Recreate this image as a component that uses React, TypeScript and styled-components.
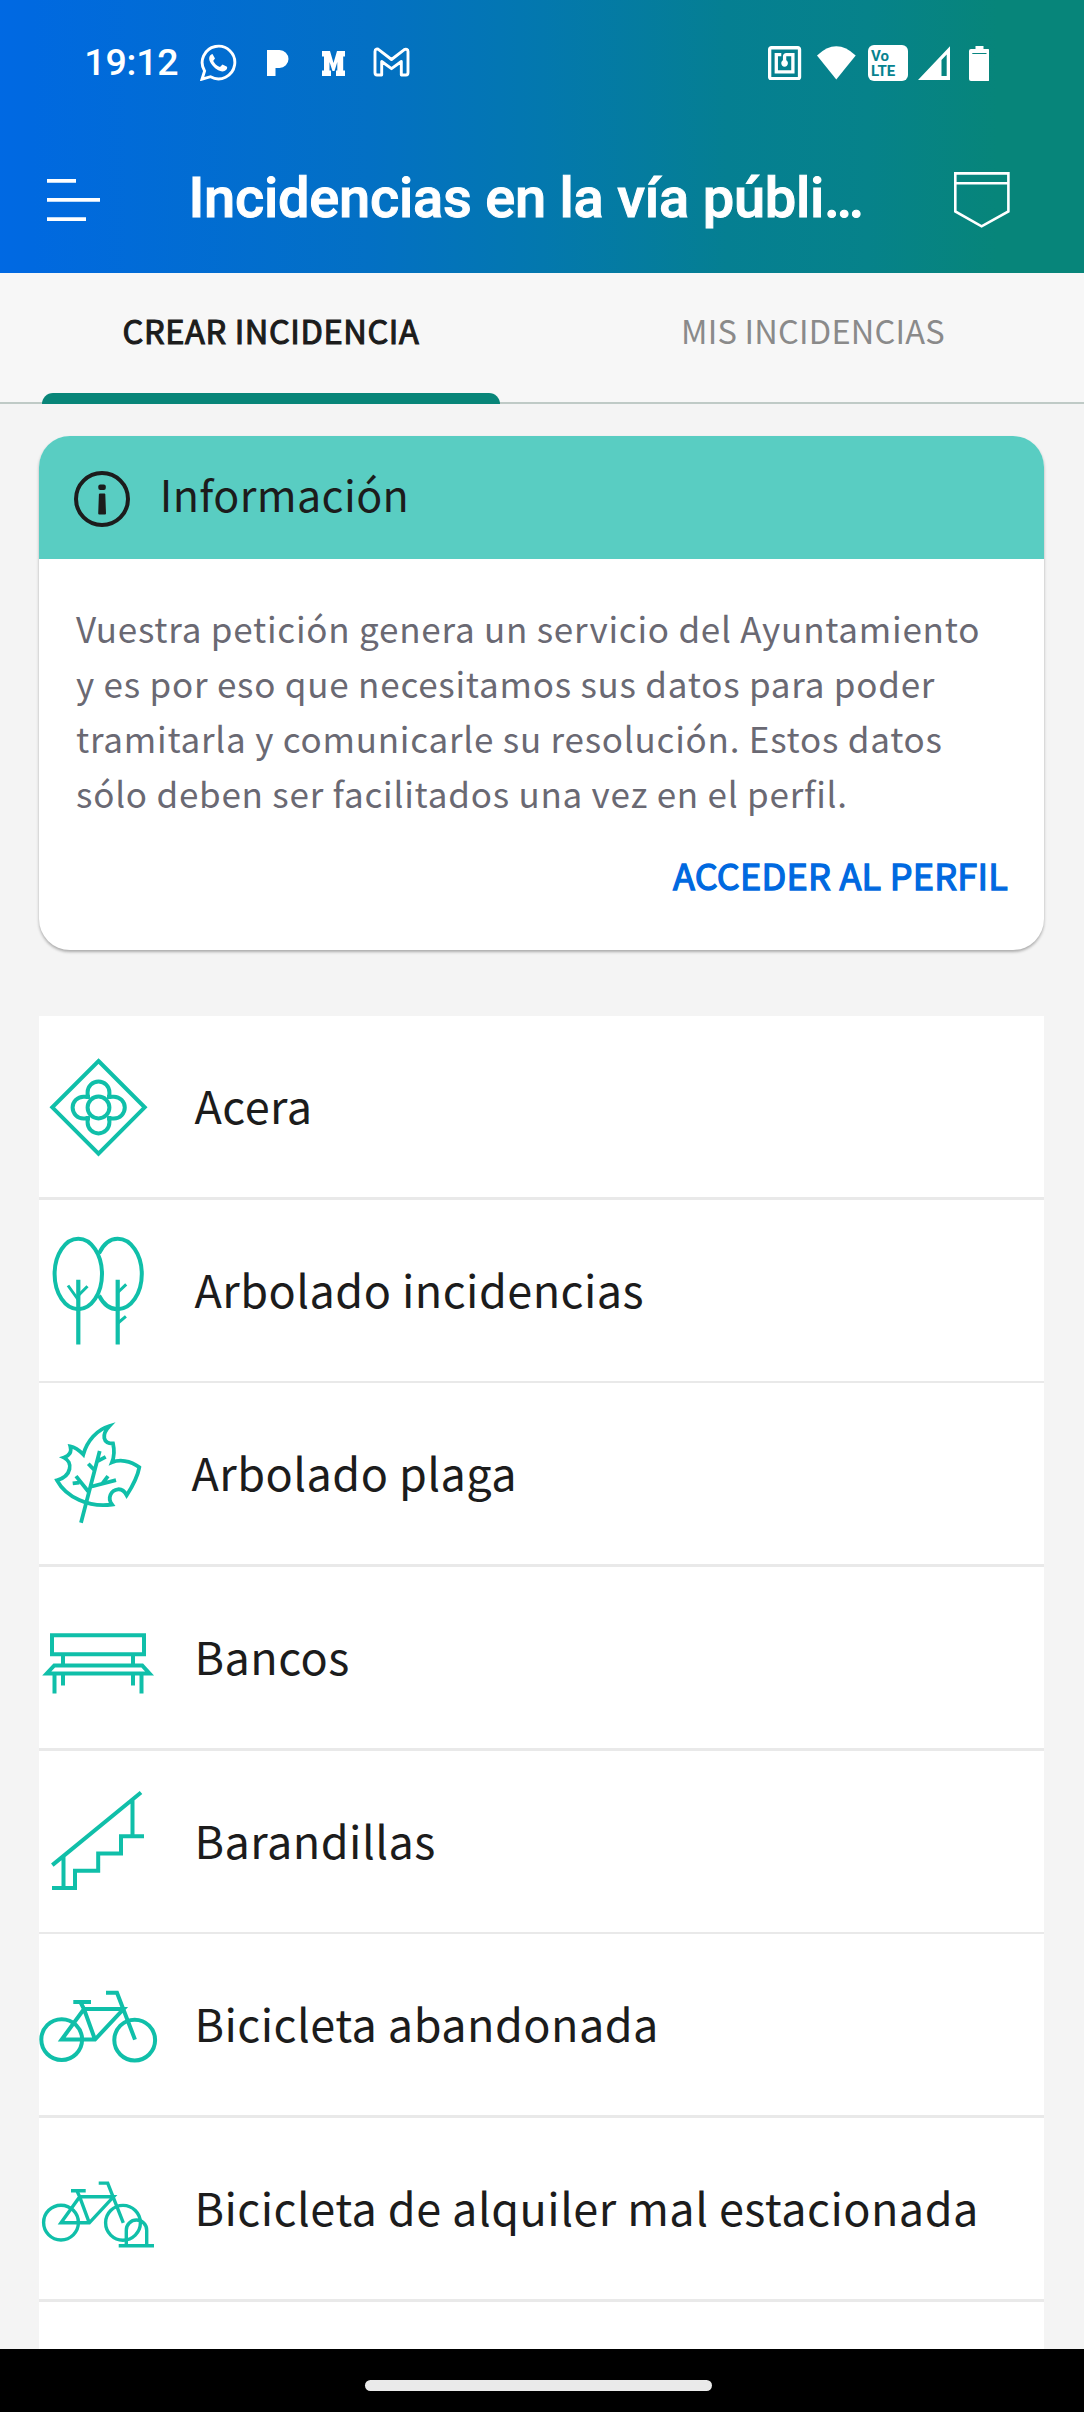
import React from "react";
import styled, { createGlobalStyle } from "styled-components";

const sans = `"Noto Sans CJK SC", "Noto Sans", sans-serif`;
const teal = "#10bfa9";
const ink = "#1c1c1c";

const Global = createGlobalStyle`
  * { box-sizing: border-box; }
  body { margin: 0; background: #f4f4f4; }
`;

const Screen = styled.div`
  width: 1084px;
  height: 2412px;
  display: flex;
  flex-direction: column;
  overflow: hidden;
  background: #f4f4f4;
  color: ${ink};
  font-family: ${sans};
`;

const Header = styled.header`
  height: 273px;
  flex: none;
  color: #fff;
  font-family: Roboto, sans-serif;
  background: linear-gradient(90deg, #0069e3 0%, #0069e0 3%, #0370c4 34%, #0378ae 50%, #057f92 67%, #06828a 80%, #07857a 92%, #07857a 100%);
`;

const StatusBar = styled.div`
  height: 124px;
  padding: 0 94.7px 0 84.3px;
  display: flex;
  align-items: center;
  justify-content: space-between;
`;

const Clock = styled.span`
  width: 115.7px;
  font-size: 37.5px;
  font-weight: 500;
  line-height: 44px;
  letter-spacing: -0.2px;
  white-space: nowrap;
`;

const IconRow = styled.div<{ $drop?: number }>`
  display: flex;
  align-items: center;
  padding-top: ${(p) => p.$drop ?? 0}px;
`;

const Glyph = styled.svg<{ $gap?: number }>`
  display: block;
  flex: none;
  margin-left: ${(p) => p.$gap ?? 0}px;
`;

const AppBar = styled.div`
  height: 149px;
  padding: 0 74.3px 0 47px;
  display: flex;
  align-items: center;
`;

const Title = styled.h1`
  flex: 1;
  margin: 0 0 0 88.5px;
  padding-bottom: 1px;
  font-size: 56px;
  font-weight: 500;
  line-height: 68px;
  letter-spacing: -0.25px;
  -webkit-text-stroke: 1px #fff;
  white-space: nowrap;
`;

const ShieldSlot = styled.div`
  padding-top: 2px;
`;

const Tabs = styled.nav`
  height: 131px;
  flex: none;
  display: grid;
  grid-template-columns: 1fr 1fr;
  background: #f7f7f7;
  border-bottom: 2px solid #bfcac6;
`;

const Tab = styled.div<{ $active?: boolean }>`
  height: 131px;
  display: flex;
  flex-direction: column;
  align-items: center;
  justify-content: space-between;
  padding-top: 32px;
  font-size: 32.6px;
  line-height: 50px;
  letter-spacing: ${(p) => (p.$active ? 0.6 : 0.2)}px;
  color: ${(p) => (p.$active ? ink : "#8a8a8a")};
  -webkit-text-stroke: ${(p) => (p.$active ? `1.1px ${ink}` : "0")};
`;

const Indicator = styled.div`
  width: 458px;
  height: 11px;
  border-radius: 11px 11px 0 0;
  background: #088578;
`;

const Content = styled.main`
  flex: 1;
  min-height: 0;
  overflow: hidden;
  padding: 32px 40px 0 39px;
`;

const Card = styled.section`
  height: 514px;
  border-radius: 31px;
  background: #fff;
  overflow: hidden;
  box-shadow: 0 2px 3px rgba(0, 0, 0, 0.3);
`;

const CardHeader = styled.header`
  height: 123px;
  padding-left: 35px;
  display: flex;
  align-items: center;
  background: #59cdc2;
`;

const CardTitle = styled.h2`
  margin: 0 0 0 29.7px;
  padding-bottom: 9px;
  font-size: 43px;
  font-weight: 400;
  line-height: 64px;
  letter-spacing: 0.4px;
`;

const CardText = styled.p`
  margin: 0;
  padding: 41px 0 0 37px;
  font-size: 35px;
  line-height: 55px;
  letter-spacing: 0.77px;
  color: #6a6973;
  white-space: pre;
`;

const CardAction = styled.div`
  padding: 26px 36px 0 0;
  text-align: right;
  font-size: 36px;
  line-height: 56px;
  letter-spacing: 0.25px;
  color: #0069e0;
  -webkit-text-stroke: 1.3px #0069e0;
`;

const List = styled.ul`
  margin: 66px 0 0;
  padding: 0;
  display: grid;
  grid-auto-rows: 181.1px;
  gap: 2.57px;
  list-style: none;
  background: #e9e9e9;
`;

const Row = styled.li`
  display: flex;
  align-items: center;
  background: #fff;
`;

const Label = styled.span<{ $inset?: number }>`
  margin-left: ${(p) => 35.5 - (p.$inset ?? 0)}px;
  padding-bottom: 3px;
  font-size: 45px;
  line-height: 66px;
  letter-spacing: 0.46px;
  white-space: nowrap;
`;

const NavBar = styled.footer`
  height: 63px;
  flex: none;
  padding: 31px 0 0 365px;
  background: #000;
`;

const Pill = styled.div`
  width: 347px;
  height: 11px;
  border-radius: 6px;
  background: #eaeaea;
`;

const PictoSvg = styled.svg`
  display: block;
  flex: none;
  fill: none;
  stroke: ${teal};
`;

/* Every pictogram is drawn on a 120 x 120 board, centred in its row. */
function Picto({ weight = 4, children }: { weight?: number; children: React.ReactNode }) {
  return (
    <PictoSvg width="120" height="120" viewBox="0 0 120 120" strokeWidth={weight}>
      {children}
    </PictoSvg>
  );
}

const Tile = () => (
  <Picto>
    <path d="M59.5 14 105.700 60.300 59.500 106.600 13.300 60.300Z" />
    <circle cx="59.5" cy="60.500" r="10.900" />
    <path d="M48.600 52V45.300a10.900 10.900 0 0 1 21.800 0V52M48.600 69v6.500a10.900 10.900 0 0 0 21.800 0V69M51 49.700H44.500a10.900 10.900 0 0 0 0 21.800H51M68 49.700h6.900a10.900 10.900 0 0 1 0 21.800H68" />
  </Picto>
);

const Trees = () => (
  <Picto>
    <ellipse cx="39.300" cy="44" rx="23.700" ry="35.200" />
    <path d="M60 23.500C64.500 14 71 8.800 78.700 8.800C92 8.800 102.800 24.500 102.800 44S92 79.200 78.700 79.200C71 79.200 64.500 74.500 60 65.500" />
    <path strokeWidth="4.200" d="M39.300 49.800V114.500M78.700 49.800V114.500" />
    <path strokeWidth="3" d="M29 55.500L39 69.500M48.500 56.300L39.300 65.500M87.200 54.300L78.700 62.500M86.900 86.300L79 93" />
  </Picto>
);

const Leaf = () => (
  <Picto weight={3.8}>
    <path d="M70.500 12C58 15.500 48 27 44.300 40.500C40.500 36.500 36 33 31.300 32.300C33 38 30 42 25 43.600C34 48 33 62 18 66.300C27 83 50 94 73 90.500C68 84 72 76 79 75.300C83 75 86 78 87.700 81.300C93 73 98.500 63 100.300 53.300C91 46 80 45.500 73 48.300C75.500 42 75.500 36 74 29.500C64 29.500 62 21 70.500 12Z" />
    <path d="M42 108.800L60.700 37.100M66.700 42.800L58.700 47.100M49.300 49.800L56 56.800M37 62.100L50.300 78.800M33.700 69.400L40.300 68.600M77 66.100L52.700 72.500M69 62.100L63.500 69.400" />
  </Picto>
);

const Bench = () => (
  <Picto>
    <path d="M13 37.300H105V56.200H13ZM24 57v9M94 57v9M15.300 67.500H103.200L110.500 75.500H7.800ZM15.500 76V95.400M24 76V87.400M94 76V87.400M102.500 76V95.400" />
  </Picto>
);

const Stairs = () => (
  <Picto>
    <path d="M13.300 84.100L102 11.500M24.500 75.500V106M93.500 18.800V54M13 107.100H36V89.800H59.200V72.600H82V55.300H105" />
  </Picto>
);

const Bike = () => (
  <Picto>
    <circle cx="22.700" cy="74.600" r="20.400" />
    <circle cx="95.700" cy="75.100" r="20.400" />
    <path d="M22.700 74.500H56L84.500 44.100H45ZM41.900 38L45 44.100L56 74.500M34.300 37.100H52M67 27.800H78L96 74.600" />
  </Picto>
);

const RentalBike = () => (
  <Picto weight={3.4}>
    <circle cx="22" cy="74.600" r="17.400" />
    <circle cx="84" cy="74.800" r="17.400" />
    <path d="M22 74.800H50.300L74.500 48.800H40.700ZM38 43L40.700 48.800L50.300 74.800M32 42.800H46.700M59.700 35.100H68.700L84.300 74.800" />
    <path d="M79.700 97.800H115M87.300 97.800V82.200a10.200 10.200 0 0 1 20.400 0V97.800" />
  </Picto>
);

const categories = [
  { name: "Acera", Icon: Tile },
  { name: "Arbolado incidencias", Icon: Trees },
  { name: "Arbolado plaga", Icon: Leaf, inset: 3 },
  { name: "Bancos", Icon: Bench },
  { name: "Barandillas", Icon: Stairs },
  { name: "Bicicleta abandonada", Icon: Bike },
  { name: "Bicicleta de alquiler mal estacionada", Icon: RentalBike },
];

export default function App() {
  return (
    <Screen>
      <Global />
      <Header>
        <StatusBar>
          <IconRow>
            <Clock>19:12</Clock>
            <Glyph width="38" height="38" viewBox="0 0 38 38">
              <path d="M2 36.200L4.600 28A16.300 16.300 0 1 1 10.500 33.700Z" fill="none" stroke="#fff" strokeWidth="2.900" />
              <path d="M12.500 11C9 12 8 16 11 20.500C15 26.500 21 29.500 24.500 28C27 27 27.500 25 27 23.800L22.500 21.500L20 24C17 23 14 20 13.300 17.700L15 15.500Z" fill="#fff" />
            </Glyph>
            <Glyph $gap={29.5} width="22" height="30" viewBox="0 0 22 30">
              <path d="M0 3H12.500a9 9 0 0 1 0 18H8.500v8H0Z" fill="#fff" />
            </Glyph>
            <Glyph $gap={32.7} width="23" height="30" viewBox="0 0 23 30">
              <path d="M0 4H8l3.500 12L15 4h8V9.500H21.200V23.500h1.800V29H14V23.500h1.300V15L12.500 24h-2L7.500 15v8.500H9V29H0V23.500H2V9.500H0Z" fill="#fff" />
            </Glyph>
            <Glyph $gap={28.2} width="37" height="30" viewBox="0 0 37 30">
              <path d="M2 25.500V4.500C2 2 4.500 1.500 6 2.800L18.500 12.500L31 2.800C33 1.500 35 2.500 35 4.500V25.500Q35 28 33 28H28.300V14.500L18.500 21.700L8.700 14.500V28H4Q2 28 2 25.500Z" fill="none" stroke="#fff" strokeWidth="2.900" strokeLinejoin="round" />
            </Glyph>
          </IconRow>
          <IconRow $drop={2}>
            <Glyph width="33.200" height="34.500" viewBox="2 2 20 20" preserveAspectRatio="none">
              <path
                d="M20 2H4c-1.100 0-2 .9-2 2v16c0 1.100.9 2 2 2h16c1.100 0 2-.9 2-2V4c0-1.100-.9-2-2-2zm0 18H4V4h16v16zM18 6h-5c-1.100 0-2 .9-2 2v2.280c-.6.35-1 .98-1 1.720 0 1.100.9 2 2 2s2-.9 2-2c0-.74-.4-1.380-1-1.720V8h3v8H8V8h2V6H6v12h12V6z"
                fill="#fff"
              />
            </Glyph>
            <Glyph $gap={15.6} width="38.700" height="34" viewBox="0 0 38.700 34">
              <path d="M0 9.500Q19.300-9 38.700 9.500L19.300 33.500Z" fill="#fff" />
            </Glyph>
            <Glyph $gap={12.1} width="40" height="36" viewBox="0 0 40 36">
              <rect width="40" height="36" rx="6" fill="#fff" />
              <g fill="#06828f" fontFamily="Roboto, sans-serif" fontSize="15" fontWeight="700">
                <text x="3" y="15.800">Vo</text>
                <text x="3" y="31">LTE</text>
              </g>
            </Glyph>
            <Glyph $gap={9.7} width="32.200" height="34" viewBox="0 0 32.200 34">
              <path fillRule="evenodd" d="M0 34L32.200 0V34ZM23.500 14V30H28.700V8.500Z" fill="#fff" />
            </Glyph>
            <Glyph $gap={18.6} width="20.800" height="35" viewBox="0 0 20.800 35">
              <path d="M6.500 0h8v3h4.300q2 0 2 2v28q0 2-2 2H2q-2 0-2-2V5q0-2 2-2h4.500Z" fill="#fff" />
              <path d="M3.300 7.500H17.500" stroke="#06857f" />
            </Glyph>
          </IconRow>
        </StatusBar>
        <AppBar>
          <Glyph width="53" height="46" viewBox="0 0 53 46">
            <path d="M0 4.900H29M0 23.900H53M0 43.100H39" stroke="#fff" strokeWidth="3.600" />
          </Glyph>
          <Title>Incidencias en la vía públi…</Title>
          <ShieldSlot>
            <Glyph width="55.700" height="56" viewBox="0 0 55.700 56">
              <path d="M1.300 1.400H54.400V39.400L27.600 54.300L1.300 39.400ZM1.300 11.200H54.400" fill="none" stroke="#fff" strokeWidth="2.600" />
            </Glyph>
          </ShieldSlot>
        </AppBar>
      </Header>
      <Tabs>
        <Tab $active>
          CREAR INCIDENCIA
          <Indicator />
        </Tab>
        <Tab>MIS INCIDENCIAS</Tab>
      </Tabs>
      <Content>
        <Card>
          <CardHeader>
            <Glyph width="56" height="58" viewBox="0 0 56 58">
              <circle cx="28" cy="30" r="26" fill="none" stroke={ink} strokeWidth="4" />
              <rect x="24.300" y="15.500" width="7.500" height="5.500" rx="2" fill={ink} />
              <path d="M26 24.500h4.500q.7 0 .8.800l.7 19.200q0 1-1 1h-5.800q-1 0-1-1l.7-19.200q.1-.8 1.100-.8Z" fill={ink} />
            </Glyph>
            <CardTitle>Información</CardTitle>
          </CardHeader>
          <CardText>{`Vuestra petición genera un servicio del Ayuntamiento
y es por eso que necesitamos sus datos para poder
tramitarla y comunicarle su resolución. Estos datos
sólo deben ser facilitados una vez en el perfil.`}</CardText>
          <CardAction>ACCEDER AL PERFIL</CardAction>
        </Card>
        <List>
          {categories.map(({ name, Icon, inset }) => (
            <Row key={name}>
              <Icon />
              <Label $inset={inset}>{name}</Label>
            </Row>
          ))}
          <Row />
        </List>
      </Content>
      <NavBar>
        <Pill />
      </NavBar>
    </Screen>
  );
}
